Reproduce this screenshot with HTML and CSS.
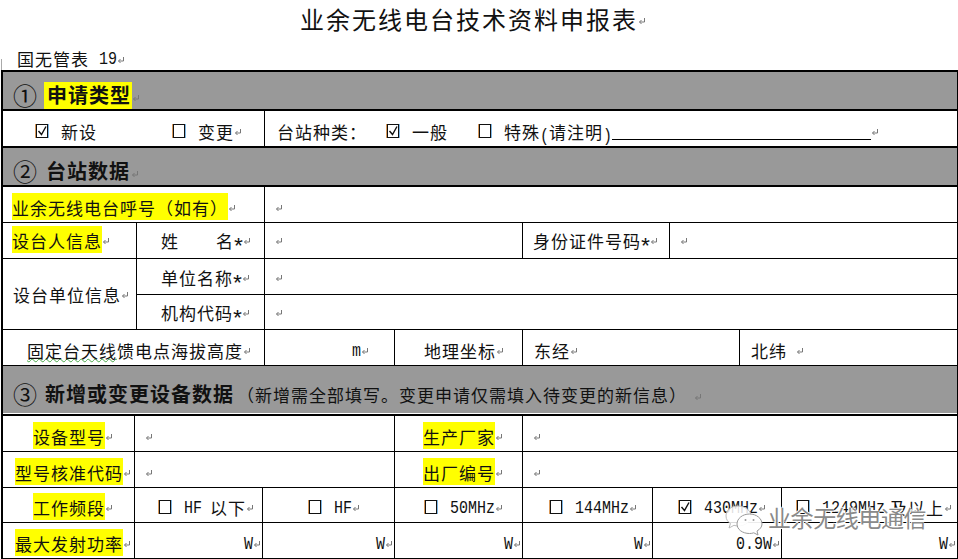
FILE: index.html
```html
<!DOCTYPE html>
<html lang="zh-CN">
<head>
<meta charset="utf-8">
<title>业余无线电台技术资料申报表</title>
<link rel="stylesheet" href="styles.css">
</head>
<body>
<svg class="defs" aria-hidden="true">
  <symbol id="ret" viewBox="0 0 8 8"><path d="M6.500 1V5H1.500M3.500 3L1.500 5L3.500 7" fill="none" stroke="#777" stroke-width="1"/></symbol>
  <symbol id="box" viewBox="0 0 14 14"><rect x="1.500" y=".5" width="11" height="13" fill="#fff" stroke="#111"/><path d="M.5 0V14" stroke="#d9995a"/><path d="M13.500 0V14" stroke="#7fb8e6"/></symbol>
  <symbol id="chk" viewBox="0 0 14 14"><rect x="1.500" y=".5" width="11" height="13" fill="#fff" stroke="#111"/><path d="M.5 0V14" stroke="#d9995a"/><path d="M13.500 0V14" stroke="#7fb8e6"/><path d="M3.500 7L6.500 10.500L11 2.500" fill="none" stroke="#111" stroke-width="1.400"/></symbol>
</svg>

<header class="head">
  <h1 class="title">业余无线电台技术资料申报表<svg class="mark"><use href="#ret"/></svg></h1>
  <div class="code">国无管表<span class="lat lead">19</span><svg class="mark"><use href="#ret"/></svg></div>
</header>

<main class="form">
  <div class="row band r1">
    <span class="num">①</span><span class="hl hd">申请类型</span><svg class="mark"><use href="#ret"/></svg>
  </div>

  <div class="row two r2">
    <div class="cell p32">
      <svg class="cb"><use href="#chk"/></svg><span>新设</span>
      <svg class="cb g75"><use href="#box"/></svg><span>变更</span><svg class="mark"><use href="#ret"/></svg>
    </div>
    <div class="cell p12">
      <span>台站种类：</span>
      <svg class="cb g19"><use href="#chk"/></svg><span>一般</span>
      <svg class="cb g30"><use href="#box"/></svg><span>特殊<span class="lat">(</span>请注明<span class="lat">)</span></span><span class="blank"></span><svg class="mark"><use href="#ret"/></svg>
    </div>
  </div>

  <div class="row band r1">
    <span class="num">②</span><span class="hd plain">台站数据</span><svg class="mark"><use href="#ret"/></svg>
  </div>

  <div class="row two">
    <div class="cell p9"><span class="hl">业余无线电台呼号（如有）</span><svg class="mark"><use href="#ret"/></svg></div>
    <div class="cell p10"><svg class="mark"><use href="#ret"/></svg></div>
  </div>

  <div class="row person b5">
    <div class="cell p9"><span class="hl">设台人信息</span><svg class="mark"><use href="#ret"/></svg></div>
    <div class="cell p24"><span>姓</span><span class="g37">名<span class="lat star">*</span></span><svg class="mark"><use href="#ret"/></svg></div>
    <div class="cell p10"><svg class="mark"><use href="#ret"/></svg></div>
    <div class="cell p10"><span>身份证件号码<span class="lat star">*</span></span><svg class="mark"><use href="#ret"/></svg></div>
    <div class="cell p10"><svg class="mark"><use href="#ret"/></svg></div>
  </div>

  <div class="unit">
    <div class="cell p10 mid"><span>设台单位信息</span><svg class="mark"><use href="#ret"/></svg></div>
    <div class="stack">
      <div class="row sub b4">
        <div class="cell p24"><span>单位名称<span class="lat star">*</span></span><svg class="mark"><use href="#ret"/></svg></div>
        <div class="cell p10"><svg class="mark"><use href="#ret"/></svg></div>
      </div>
      <div class="row sub short b4">
        <div class="cell p24"><span>机构代码<span class="lat star">*</span></span><svg class="mark"><use href="#ret"/></svg></div>
        <div class="cell p10"><svg class="mark"><use href="#ret"/></svg></div>
      </div>
    </div>
  </div>

  <div class="row site">
    <div class="cell p24"><span><span class="squig">固定台天线</span>馈电点海拔高度</span><svg class="mark"><use href="#ret"/></svg></div>
    <div class="cell p87"><span class="lat">m</span><svg class="mark"><use href="#ret"/></svg></div>
    <div class="cell p29"><span>地理坐标</span><svg class="mark"><use href="#ret"/></svg></div>
    <div class="cell p11"><span>东经</span><svg class="mark"><use href="#ret"/></svg></div>
    <div class="cell p11"><span>北纬</span><svg class="mark g9"><use href="#ret"/></svg></div>
  </div>

  <div class="row band r3">
    <span class="num">③</span><span class="hd plain tight">新增或变更设备数据</span><span class="note">（新增需全部填写。变更申请仅需填入待变更的新信息）</span><svg class="mark g7"><use href="#ret"/></svg>
  </div>

  <div class="row gear">
    <div class="cell p30"><span class="hl">设备型号</span><svg class="mark"><use href="#ret"/></svg></div>
    <div class="cell p10"><svg class="mark"><use href="#ret"/></svg></div>
    <div class="cell p28"><span class="hl">生产厂家</span><svg class="mark"><use href="#ret"/></svg></div>
    <div class="cell p10"><svg class="mark"><use href="#ret"/></svg></div>
  </div>

  <div class="row gear">
    <div class="cell p12"><span class="hl">型号核准代码</span><svg class="mark"><use href="#ret"/></svg></div>
    <div class="cell p10"><svg class="mark"><use href="#ret"/></svg></div>
    <div class="cell p28"><span class="hl">出厂编号</span><svg class="mark"><use href="#ret"/></svg></div>
    <div class="cell p10"><svg class="mark"><use href="#ret"/></svg></div>
  </div>

  <div class="row bands short">
    <div class="cell p30"><span class="hl">工作频段</span><svg class="mark"><use href="#ret"/></svg></div>
    <div class="cell p23"><svg class="cb"><use href="#box"/></svg><span class="lat">HF</span><span class="g8">以下</span><svg class="mark"><use href="#ret"/></svg></div>
    <div class="cell p45"><svg class="cb"><use href="#box"/></svg><span class="lat">HF</span><svg class="mark"><use href="#ret"/></svg></div>
    <div class="cell p29"><svg class="cb"><use href="#box"/></svg><span class="lat">50MHz</span><svg class="mark"><use href="#ret"/></svg></div>
    <div class="cell p26"><svg class="cb"><use href="#box"/></svg><span class="lat">144MHz</span><svg class="mark"><use href="#ret"/></svg></div>
    <div class="cell p25"><svg class="cb"><use href="#chk"/></svg><span class="lat">430MHz</span><svg class="mark"><use href="#ret"/></svg></div>
    <div class="cell p14"><svg class="cb"><use href="#box"/></svg><span class="lat">1249MHz</span><span class="g5">及以上</span><svg class="mark"><use href="#ret"/></svg></div>
  </div>

  <div class="row bands">
    <div class="cell p12"><span class="hl">最大发射功率</span><svg class="mark"><use href="#ret"/></svg></div>
    <div class="cell end"><span class="lat">W</span><svg class="mark"><use href="#ret"/></svg></div>
    <div class="cell end"><span class="lat">W</span><svg class="mark"><use href="#ret"/></svg></div>
    <div class="cell end"><span class="lat">W</span><svg class="mark"><use href="#ret"/></svg></div>
    <div class="cell end"><span class="lat">W</span><svg class="mark"><use href="#ret"/></svg></div>
    <div class="cell end"><span class="lat">0.9W</span><svg class="mark"><use href="#ret"/></svg></div>
    <div class="cell end"><span class="lat">W</span><svg class="mark"><use href="#ret"/></svg></div>
  </div>
</main>

<span class="crop"></span>

<div class="watermark">
  <svg class="wx" viewBox="0 0 38 31" aria-hidden="true">
    <path d="M13 1C6 1 1 5.300 1 11C1 14.500 3 17 5.500 18.500L4 23L9 20.300C10.500 20.800 12 21 13.500 21C20 21 26 16.500 26 11C26 5.300 20 1 13 1Z" fill="rgba(255,255,255,.85)" stroke="#bbb"/>
    <path d="M24.500 9C17.500 9 12 13.500 12 19C12 24.500 17.500 28.500 24.500 28.500C26 28.500 27.500 28.300 28.800 27.800L33 30L32 26C35 24.300 37 21.800 37 19C37 13.500 31.500 9 24.500 9Z" fill="rgba(255,255,255,.92)" stroke="#999"/>
    <circle cx="20.500" cy="15" r="1" fill="#999"/><circle cx="28.500" cy="15" r="1" fill="#999"/>
  </svg>
  <span class="wm-text">业余无线电通信</span>
</div>
</body>
</html>
```

FILE: styles.css
```css
* { box-sizing: border-box; }

html, body { margin: 0; padding: 0; }

body {
  width: 958px;
  height: 559px;
  overflow: hidden;
  background: #fff;
  color: #111;
  font-family: "Noto Sans CJK SC", "Liberation Serif", sans-serif;
  font-size: 17px;
  letter-spacing: 1px;
  position: relative;
}

.defs { position: absolute; width: 0; height: 0; }

/* heading block */
.head { height: 70px; padding-left: 17px; }

.title {
  margin: 0 0 9px 283px;
  height: 38px;
  display: flex;
  align-items: center;
  font-size: 24px;
  font-weight: 400;
  letter-spacing: 2px;
  line-height: 38px;
}

.code {
  display: flex;
  align-items: center;
  height: 23px;
  line-height: 23px;
}

.lat {
  display: inline-block;
  font-family: "Liberation Mono", monospace;
  font-size: 15px;
  letter-spacing: 0;
  transform: translateY(1px) scaleY(1.2);
}

.star { transform: translateY(4px) scale(1.5); }

.lead { margin-left: 10px; }

/* table frame */
.form {
  margin-left: 1px;
  width: 957px;
  height: 489px;
  border-top: 2px solid #000;
  border-left: 2px solid #000;
  border-right: 1px solid #000;
}

.row {
  display: grid;
  height: 36px;
  border-bottom: 1px solid #000;
  --pt: 6px;
  --pb: 2px;
}

.b5 { --pt: 3px; --pb: 5px; }
.short { height: 35px; --pt: 5px; }
.b4 { --pt: 4px; --pb: 4px; }
.short.b4 { --pt: 3px; }

.band {
  display: flex;
  align-items: flex-end;
  height: 39px;
  padding-left: 10px;
  background: #999;
  border-bottom: 2px solid #000;
}

.band .mark { margin-bottom: 7px; }

.r3 {
  height: 50px;
  padding-bottom: 6px;
  box-shadow: inset 0 -1px 0 #fff;
}

.r2 { height: 37px; border-bottom: 2px solid #000; }

.num {
  width: 31px;
  height: 27px;
  font-size: 24px;
  line-height: 26px;
  letter-spacing: 0;
}

.hd {
  height: 27px;
  padding-left: 3px;
  padding-right: 1px;
  font-size: 20px;
  font-weight: 700;
  letter-spacing: 1px;
  line-height: 26px;
}

.plain { padding-left: 2px; }
.tight { padding-left: 1px; padding-right: 0; }

.note { margin-left: 3px; font-size: 17px; line-height: 27px; }

.two { grid-template-columns: 262px 1fr; }
.person { grid-template-columns: 134px 128px 258px 147px 1fr; }
.sub { grid-template-columns: 128px 1fr; }
.site { grid-template-columns: 262px 130px 128px 217px 1fr; }
.gear { grid-template-columns: 132px 260px 128px 1fr; }
.bands { grid-template-columns: 132px 128px 132px 128px 130px 129px 1fr; }

.cell {
  display: flex;
  align-items: center;
  padding-top: var(--pt);
  padding-bottom: var(--pb);
  border-right: 1px solid #000;
  white-space: nowrap;
}

.row > .cell:last-child { border-right: 0; }

.cell > span { height: 27px; line-height: 29px; }

.unit {
  display: grid;
  grid-template-columns: 134px 1fr;
  height: 71px;
}

.mid {
  padding-top: 0;
  padding-bottom: 2px;
  border-bottom: 1px solid #000;
}

.hl { background: #ff0; }

.squig { text-decoration: underline wavy #4aa84a 1px; text-underline-offset: 0; }

.mark { display: block; flex: none; width: 8px; height: 8px; margin-top: 3px; }

.cb { display: block; flex: none; width: 14px; height: 14px; margin-top: 1px; margin-right: 12px; }

.cell > .blank {
  width: 259px;
  height: 1px;
  background: #000;
  align-self: flex-end;
  margin-bottom: 4px;
}

.end { justify-content: flex-end; padding-right: 1px; }

.p9 { padding-left: 9px; }
.p10 { padding-left: 10px; }
.p11 { padding-left: 11px; }
.p12 { padding-left: 12px; }
.p14 { padding-left: 14px; }
.p23 { padding-left: 23px; }
.p24 { padding-left: 24px; }
.p25 { padding-left: 25px; }
.p26 { padding-left: 26px; }
.p28 { padding-left: 28px; }
.p29 { padding-left: 29px; }
.p30 { padding-left: 30px; }
.p32 { padding-left: 32px; }
.p45 { padding-left: 45px; }
.p87 { padding-left: 87px; }

.g5 { margin-left: 5px; }
.g7 { margin-left: 7px; }
.g8 { margin-left: 8px; }
.g9 { margin-left: 9px; }
.g19 { margin-left: 19px; }
.g30 { margin-left: 30px; }
.g37 { margin-left: 37px; }
.g75 { margin-left: 75px; }

/* overlays */
.crop {
  position: absolute;
  left: 1px;
  top: 59px;
  width: 1px;
  height: 11px;
  background: #aaa;
}

.watermark {
  position: absolute;
  left: 725px;
  top: 502px;
  display: flex;
  align-items: center;
  gap: 5px;
}

.wx { width: 38px; height: 31px; display: block; }

.wm-text {
  margin-bottom: 7px;
  font-size: 23px;
  letter-spacing: -.4px;
  line-height: 30px;
  color: #8a8a8a;
  text-shadow: 1px 1px 0 #fff, -1px 0 0 #fff, 0 -1px 0 #fff;
}
```
